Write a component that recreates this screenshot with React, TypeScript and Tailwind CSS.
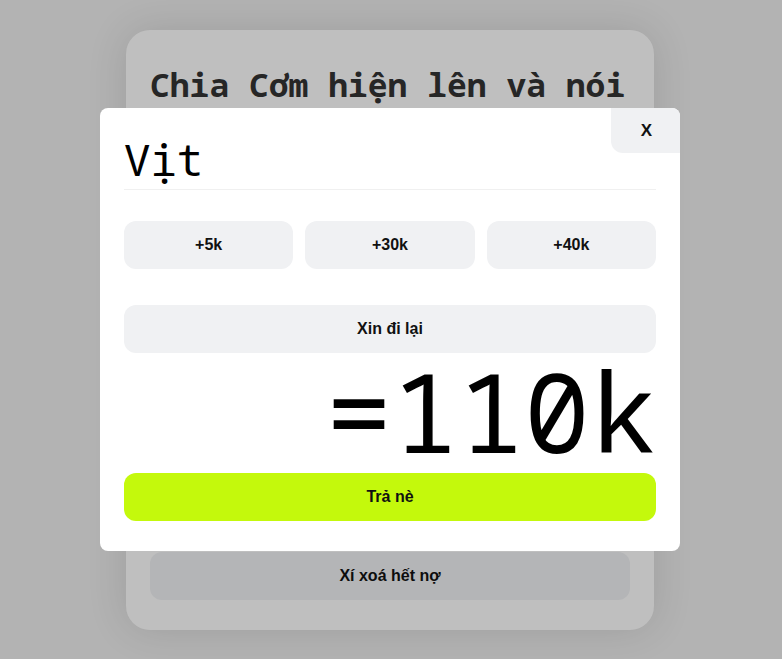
export default function App() {
  return (
    <div className="relative min-h-[659px] w-full bg-[#b3b3b3] font-['Liberation_Sans',Arial,sans-serif]">
      {/* page behind the overlay */}
      <div className="flex h-[659px] items-center justify-center pr-[2px]">
        <div className="flex h-[600px] w-[528px] flex-col justify-between rounded-3xl bg-[#bfbfbf] px-6 pb-[30px] pt-[35px] shadow-[0_0_40px_rgba(0,0,0,0.12)]">
          <h1 className="font-['Noto_Sans_Mono','DejaVu_Sans_Mono',monospace] text-[33px] font-bold leading-[40px] text-[#262626]">
            Chia Cơm hiện lên và nói
          </h1>
          <button className="h-12 w-full rounded-xl bg-[#b4b5b7] text-base font-bold text-[#0d0d0d]">
            Xí xoá hết nợ
          </button>
        </div>
      </div>

      {/* modal */}
      <div className="absolute inset-0 flex items-center justify-center pr-[2px]">
        <div className="relative w-[580px] rounded-lg bg-white px-6 pb-[30px]">
          <button className="absolute right-0 top-0 flex h-[45px] w-[69px] items-center justify-center rounded-bl-xl rounded-tr-lg bg-[#f0f1f3] pl-[2px] text-[17px] font-bold text-[#111]">
            X
          </button>
          <div className="border-b border-[#f0f0f0] pb-[5px] pt-[26px] font-['Noto_Sans_Mono','DejaVu_Sans_Mono',monospace] text-[44px] leading-[50px] text-black">
            Vịt
          </div>
          <div className="mt-[31px] grid grid-cols-3 gap-3">
            <button className="h-12 rounded-xl bg-[#f0f1f3] text-base font-bold text-[#111]">+5k</button>
            <button className="h-12 rounded-xl bg-[#f0f1f3] text-base font-bold text-[#111]">+30k</button>
            <button className="h-12 rounded-xl bg-[#f0f1f3] text-base font-bold text-[#111]">+40k</button>
          </div>
          <button className="mt-9 h-12 w-full rounded-xl bg-[#f0f1f3] text-base font-bold text-[#111]">
            Xin đi lại
          </button>
          <div className="mb-[6px] text-right font-['Noto_Sans_Mono','DejaVu_Sans_Mono',monospace] text-[110px] leading-[114px] text-black">
            =110k
          </div>
          <button className="h-12 w-full rounded-xl bg-[#c4f90c] text-base font-bold text-[#111]">
            Trả nè
          </button>
        </div>
      </div>
    </div>
  );
}
